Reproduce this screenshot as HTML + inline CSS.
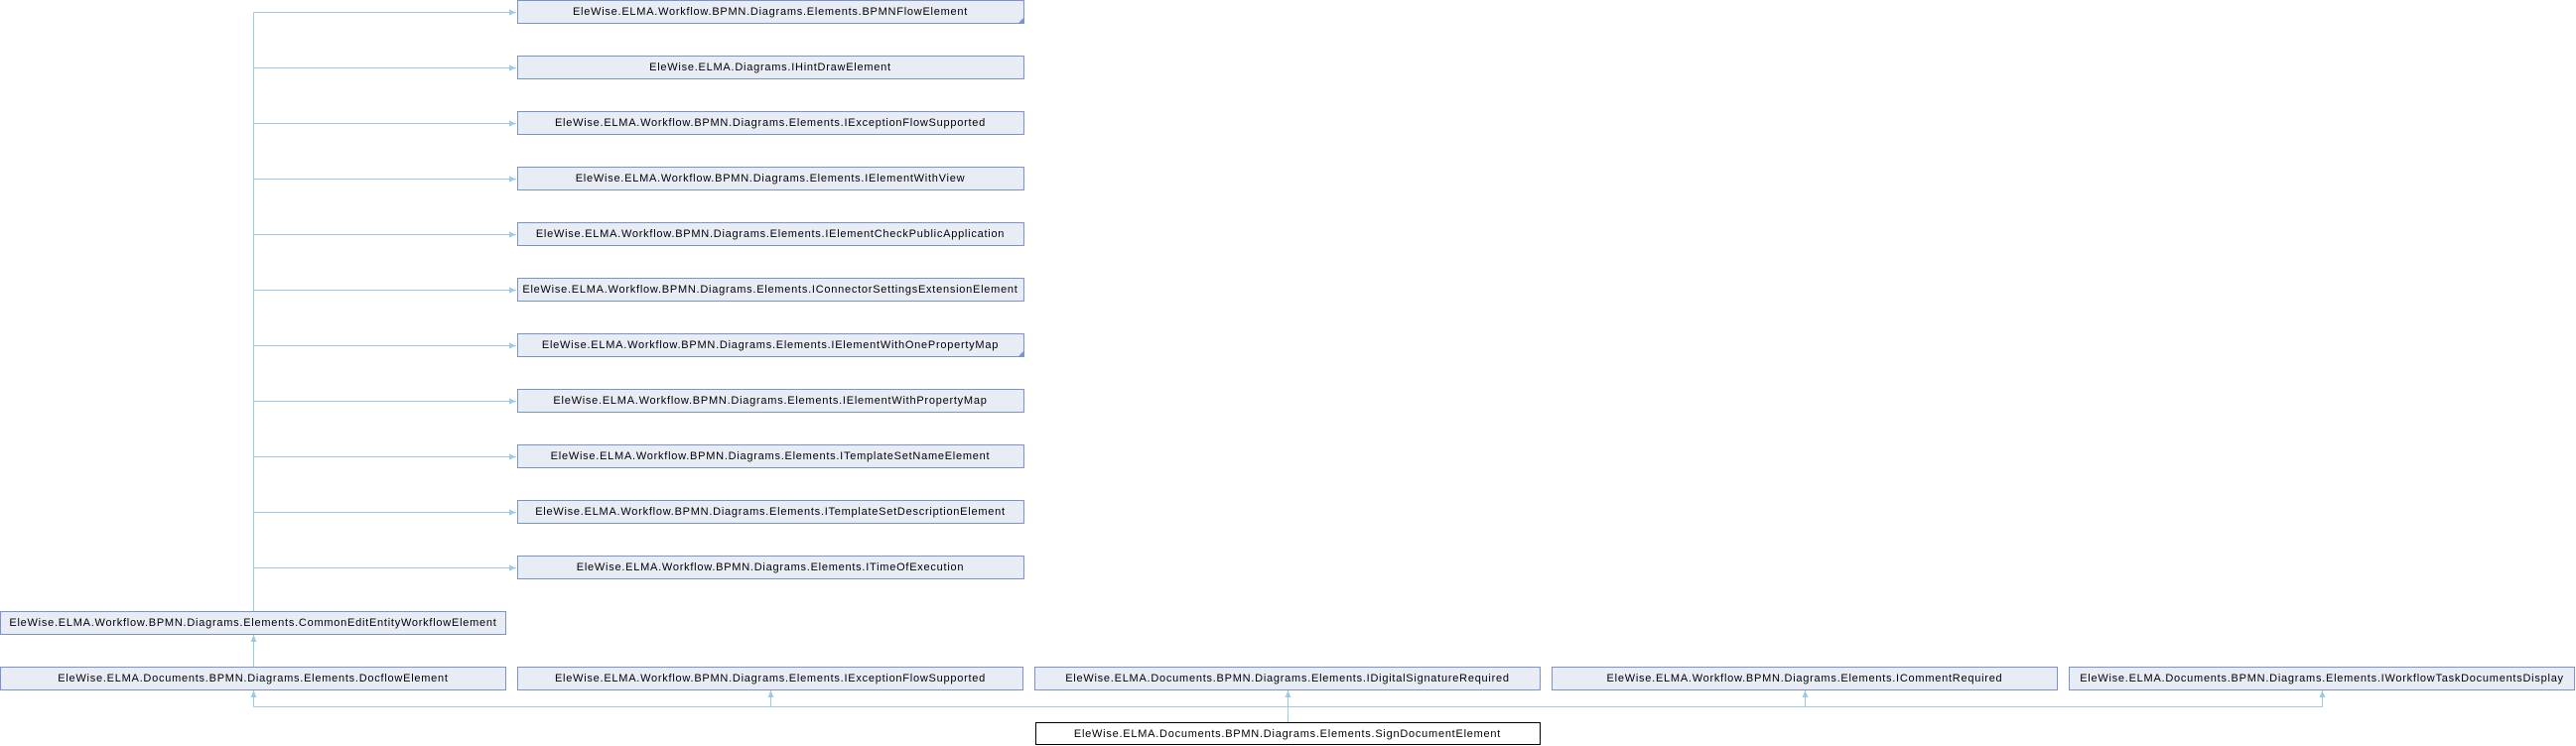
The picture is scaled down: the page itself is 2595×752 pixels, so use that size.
<!DOCTYPE html>
<html><head><meta charset="utf-8"><style>
html,body{margin:0;padding:0;background:#fff;}
svg{display:block;}
text{font-family:"Liberation Sans",sans-serif;font-size:11px;letter-spacing:0.75px;fill:#000;}
</style></head><body>
<svg width="2595" height="752" xmlns="http://www.w3.org/2000/svg">
<defs>
<marker id="a" markerWidth="8" markerHeight="8" refX="7" refY="3" orient="auto" markerUnits="userSpaceOnUse"><path d="M0,0 L7,3 L0,6 z" fill="#9ccbe6"/></marker>
</defs>
<g stroke="#9ccbe6" stroke-width="1" fill="none">
<line x1="255.5" y1="12.5" x2="255.5" y2="616"/>
<line x1="255.5" y1="12.5" x2="520" y2="12.5" marker-end="url(#a)"/>
<line x1="255.5" y1="68.5" x2="520" y2="68.5" marker-end="url(#a)"/>
<line x1="255.5" y1="124.5" x2="520" y2="124.5" marker-end="url(#a)"/>
<line x1="255.5" y1="180.5" x2="520" y2="180.5" marker-end="url(#a)"/>
<line x1="255.5" y1="236.5" x2="520" y2="236.5" marker-end="url(#a)"/>
<line x1="255.5" y1="292.5" x2="520" y2="292.5" marker-end="url(#a)"/>
<line x1="255.5" y1="348.5" x2="520" y2="348.5" marker-end="url(#a)"/>
<line x1="255.5" y1="404.5" x2="520" y2="404.5" marker-end="url(#a)"/>
<line x1="255.5" y1="460.5" x2="520" y2="460.5" marker-end="url(#a)"/>
<line x1="255.5" y1="516.5" x2="520" y2="516.5" marker-end="url(#a)"/>
<line x1="255.5" y1="572.5" x2="520" y2="572.5" marker-end="url(#a)"/>
<line x1="255.5" y1="672" x2="255.5" y2="640" marker-end="url(#a)"/>
<line x1="255.5" y1="712.5" x2="2339.5" y2="712.5"/>
<line x1="255.5" y1="712.5" x2="255.5" y2="696" marker-end="url(#a)"/>
<line x1="776.5" y1="712.5" x2="776.5" y2="696" marker-end="url(#a)"/>
<line x1="1297.5" y1="728" x2="1297.5" y2="696" marker-end="url(#a)"/>
<line x1="1818.5" y1="712.5" x2="1818.5" y2="696" marker-end="url(#a)"/>
<line x1="2339.5" y1="712.5" x2="2339.5" y2="696" marker-end="url(#a)"/>
</g>
<g fill="#e8ecf5" stroke="#7a93cf" stroke-width="1">
<rect x="521.5" y="0.5" width="510" height="23"/>
<rect x="521.5" y="56.5" width="510" height="23"/>
<rect x="521.5" y="112.5" width="510" height="23"/>
<rect x="521.5" y="168.5" width="510" height="23"/>
<rect x="521.5" y="224.5" width="510" height="23"/>
<rect x="521.5" y="280.5" width="510" height="23"/>
<rect x="521.5" y="336.5" width="510" height="23"/>
<rect x="521.5" y="392.5" width="510" height="23"/>
<rect x="521.5" y="448.5" width="510" height="23"/>
<rect x="521.5" y="504.5" width="510" height="23"/>
<rect x="521.5" y="560.5" width="510" height="23"/>
<rect x="0.5" y="616.5" width="509" height="23"/>
<rect x="0.5" y="672.5" width="509" height="23"/>
<rect x="521.5" y="672.5" width="509" height="23"/>
<rect x="1042.5" y="672.5" width="509" height="23"/>
<rect x="1563.5" y="672.5" width="509" height="23"/>
<rect x="2084.5" y="672.5" width="509" height="23"/>
</g>
<rect x="1043.5" y="728.5" width="508" height="22" fill="#fff" stroke="#000"/>
<path d="M1031,18 L1031,23 L1026,23 z" fill="#7a93cf"/>
<path d="M1031,354 L1031,359 L1026,359 z" fill="#7a93cf"/>
<g text-anchor="middle">
<text x="776" y="15">EleWise.ELMA.Workflow.BPMN.Diagrams.Elements.BPMNFlowElement</text>
<text x="776" y="71">EleWise.ELMA.Diagrams.IHintDrawElement</text>
<text x="776" y="127">EleWise.ELMA.Workflow.BPMN.Diagrams.Elements.IExceptionFlowSupported</text>
<text x="776" y="183">EleWise.ELMA.Workflow.BPMN.Diagrams.Elements.IElementWithView</text>
<text x="776" y="239">EleWise.ELMA.Workflow.BPMN.Diagrams.Elements.IElementCheckPublicApplication</text>
<text x="776" y="295">EleWise.ELMA.Workflow.BPMN.Diagrams.Elements.IConnectorSettingsExtensionElement</text>
<text x="776" y="351">EleWise.ELMA.Workflow.BPMN.Diagrams.Elements.IElementWithOnePropertyMap</text>
<text x="776" y="407">EleWise.ELMA.Workflow.BPMN.Diagrams.Elements.IElementWithPropertyMap</text>
<text x="776" y="463">EleWise.ELMA.Workflow.BPMN.Diagrams.Elements.ITemplateSetNameElement</text>
<text x="776" y="519">EleWise.ELMA.Workflow.BPMN.Diagrams.Elements.ITemplateSetDescriptionElement</text>
<text x="776" y="575">EleWise.ELMA.Workflow.BPMN.Diagrams.Elements.ITimeOfExecution</text>
<text x="255" y="631">EleWise.ELMA.Workflow.BPMN.Diagrams.Elements.CommonEditEntityWorkflowElement</text>
<text x="255" y="687">EleWise.ELMA.Documents.BPMN.Diagrams.Elements.DocflowElement</text>
<text x="776" y="687">EleWise.ELMA.Workflow.BPMN.Diagrams.Elements.IExceptionFlowSupported</text>
<text x="1297" y="687">EleWise.ELMA.Documents.BPMN.Diagrams.Elements.IDigitalSignatureRequired</text>
<text x="1818" y="687">EleWise.ELMA.Workflow.BPMN.Diagrams.Elements.ICommentRequired</text>
<text x="2339" y="687">EleWise.ELMA.Documents.BPMN.Diagrams.Elements.IWorkflowTaskDocumentsDisplay</text>
<text x="1297" y="743">EleWise.ELMA.Documents.BPMN.Diagrams.Elements.SignDocumentElement</text>
</g>
</svg>
</body></html>
